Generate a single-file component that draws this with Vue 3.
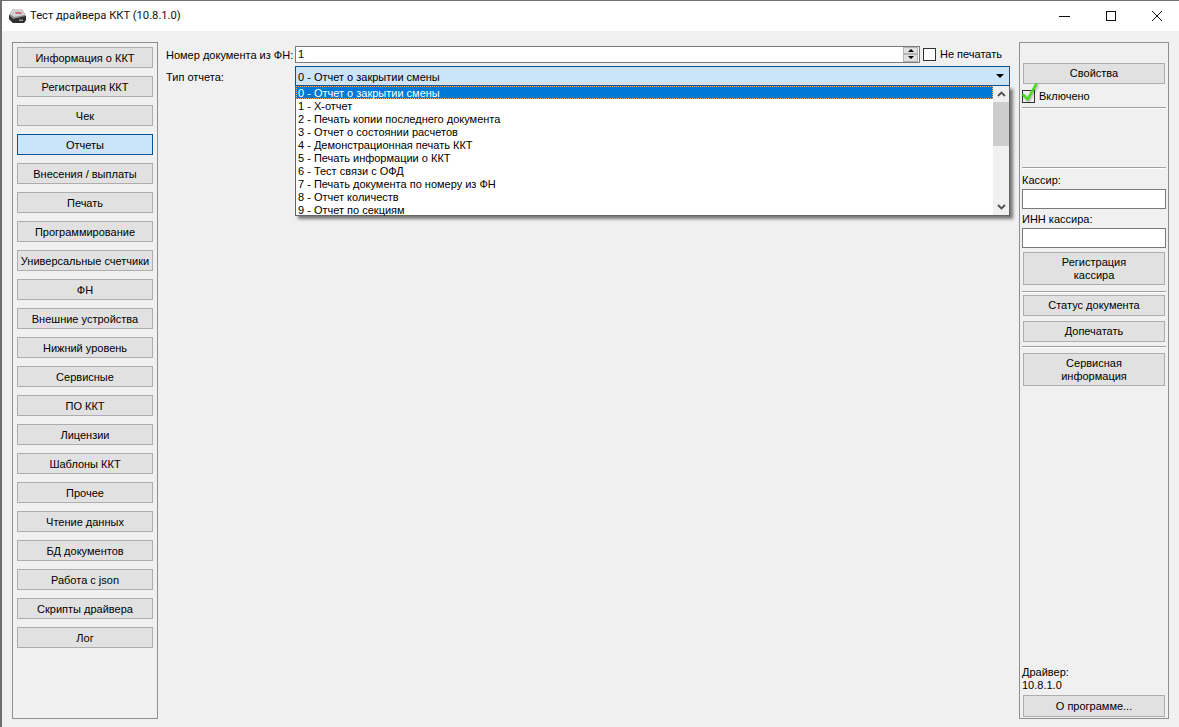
<script setup>
const navItems = ['Информация о ККТ','Регистрация ККТ','Чек','Отчеты','Внесения / выплаты','Печать','Программирование','Универсальные счетчики','ФН','Внешние устройства','Нижний уровень','Сервисные','ПО ККТ','Лицензии','Шаблоны ККТ','Прочее','Чтение данных','БД документов','Работа с json','Скрипты драйвера','Лог']
const reports = ['0 - Отчет о закрытии смены','1 - X-отчет','2 - Печать копии последнего документа','3 - Отчет о состоянии расчетов','4 - Демонстрационная печать ККТ','5 - Печать информации о ККТ','6 - Тест связи с ОФД','7 - Печать документа по номеру из ФН','8 - Отчет количеств','9 - Отчет по секциям']
</script>

<template>
  <div class="window">
    <header class="titlebar">
      <svg class="appicon" width="19" height="18" viewBox="0 0 19 18">
        <path d="M1 8 L5 2 H14 L18 9 V13 L16 16 H5 L1 12Z" fill="#8a8a8a"/>
        <path d="M5 2 H14 L17 8 L6 10 L2 7Z" fill="#d2d2d2"/>
        <path d="M7 5 H13 L14 7 H8Z" fill="#c9707e"/>
        <path d="M1 8 L5 12 V16 L1 12Z M5 12 L18 9 V13 L16 16 H5Z" fill="#2e2e2e"/>
        <path d="M11 12.5 H15 V14 H11Z" fill="#9a9a9a"/>
      </svg>
      <span class="title">Тест драйвера ККТ (10.8.1.0)</span>
      <div class="winbtns">
        <svg width="12" height="12" viewBox="0 0 12 12"><path d="M0 6.5H11" stroke="#111" fill="none"/></svg>
        <svg width="12" height="12" viewBox="0 0 12 12"><rect x="1.5" y="1.5" width="9" height="9" stroke="#111" fill="none"/></svg>
        <svg width="12" height="12" viewBox="0 0 12 12"><path d="M1 1L11 11M11 1L1 11" stroke="#111" fill="none"/></svg>
      </div>
    </header>
    <main class="body">
      <nav class="panel left">
        <button v-for="n in navItems" :key="n" class="btn nav" :class="{ active: n === 'Отчеты' }">{{ n }}</button>
      </nav>
      <section class="center">
        <div class="row first">
          <label class="lbl">Номер документа из ФН:</label>
          <div class="spin">
            <span class="val">1</span>
            <span class="spinbtns">
              <span class="spinbtn"><i class="up"></i></span>
              <span class="spinbtn"><i class="down"></i></span>
            </span>
          </div>
          <span class="chk"></span>
          <span class="chklbl">Не печатать</span>
        </div>
        <div class="row second">
          <label class="lbl">Тип отчета:</label>
          <div class="combowrap">
            <div class="combo">
              <span class="comboval">0 - Отчет о закрытии смены</span>
              <i class="caret"></i>
            </div>
            <div class="dropdown">
              <ul class="items">
                <li v-for="(r, i) in reports" :key="r" :class="{ sel: i === 0 }">{{ r }}</li>
              </ul>
              <div class="scroll">
                <svg class="arrow" width="9" height="6" viewBox="0 0 9 6"><path d="M1 5L4.5 1.5L8 5" stroke="#505050" stroke-width="1.8" fill="none"/></svg>
                <div class="track"><div class="thumb"></div></div>
                <svg class="arrow" width="9" height="6" viewBox="0 0 9 6"><path d="M1 1L4.5 4.5L8 1" stroke="#505050" stroke-width="1.8" fill="none"/></svg>
              </div>
            </div>
          </div>
        </div>
      </section>
      <aside class="panel right">
        <button class="btn props">Свойства</button>
        <div class="enabled">
          <span class="chk"></span>
          <svg class="tick" width="18" height="20" viewBox="0 0 18 20"><path d="M1.5 12L6.5 17.5L15.5 1.5" fill="none" stroke="#44dc14" stroke-width="2.4" stroke-linejoin="miter"/></svg>
          <span>Включено</span>
        </div>
        <hr class="sep s1" />
        <hr class="sep s2" />
        <label class="cap c1">Кассир:</label>
        <div class="field"></div>
        <label class="cap c2">ИНН кассира:</label>
        <div class="field"></div>
        <button class="btn tall b1">Регистрация<br />кассира</button>
        <hr class="sep s3" />
        <button class="btn">Статус документа</button>
        <button class="btn b2">Допечатать</button>
        <hr class="sep s4" />
        <button class="btn tall">Сервисная<br />информация</button>
        <div class="driver">Драйвер:<br />10.8.1.0</div>
        <button class="btn about">О программе...</button>
      </aside>
    </main>
  </div>
</template>

<style scoped>
.window {
  width: 1179px; height: 727px; box-sizing: border-box; overflow: hidden;
  background: #f0f0f0; border-top: 1px solid #707070; border-left: 2px solid #6e6e6e;
  font: 11px/13px "Liberation Sans", Tahoma, sans-serif; color: #000;
  display: flex; flex-direction: column;
}
.titlebar { height: 30px; background: #fff; display: flex; align-items: center; padding-left: 6px; flex: none; }
.appicon { flex: none; }
.title { font: 11.2px/16px Roboto, sans-serif; margin-left: 3px; color: #111; white-space: nowrap; }
.winbtns { margin-left: auto; display: flex; gap: 34px; padding-right: 16px; }
.body { flex: 1; display: flex; padding: 11px 10px 8px 10px; gap: 8px; }
.panel { border: 1px solid #8f8f8f; box-sizing: border-box; display: flex; flex-direction: column; }
.left { width: 146px; padding: 4px 4px; gap: 8px; }
.btn {
  font: inherit; color: #000; background: #e1e1e1; border: 1px solid #adadad; padding: 0;
  height: 21px; flex: none; box-sizing: border-box; text-align: center; white-space: nowrap;
}
.nav { padding-top: 1px; }
.nav.active { background: #cce4f7; border-color: #005499; }
.center { flex: 1; min-width: 0; }
.row { display: flex; position: relative; white-space: nowrap; }
.first { height: 16px; margin-top: 4px; align-items: center; }
.first .lbl { padding-top: 2px; }
.second { margin-top: 4px; }
.lbl { width: 129px; flex: none; }
.second .lbl { padding-top: 5px; }
.spin {
  width: 625px; height: 17px; box-sizing: border-box; background: #fff; border: 1px solid #7a7a7a;
  display: flex; justify-content: space-between; align-items: stretch; padding: 0 1px 0 2px; line-height: 15px;
}
.spinbtns { width: 15px; display: flex; flex-direction: column; padding: 0; }
.spinbtn { flex: 1; background: #e1e1e1; border: 1px solid #b4b4b4; display: flex; align-items: center; justify-content: center; box-sizing: border-box; }
.up { border: 3px solid transparent; border-top: 0; border-bottom: 3px solid #000; }
.down { border: 3px solid transparent; border-bottom: 0; border-top: 3px solid #000; }
.chk { width: 13px; height: 13px; box-sizing: border-box; border: 1px solid #333; background: #fff; flex: none; display: block; }
.first .chk { margin-left: 3px; }
.chklbl { margin-left: 4px; }
.combowrap { width: 715px; position: relative; }
.combo {
  height: 20px; box-sizing: border-box; background: #cce4f7; border: 1px solid #005499;
  display: flex; align-items: center; justify-content: space-between; padding: 0 5px 0 2px;
}
.comboval { padding-top: 2px; }
.caret { border: 4px solid transparent; border-bottom: 0; border-top: 4px solid #000; }
.dropdown {
  position: absolute; top: 20px; left: 0; width: 715px; height: 130px; box-sizing: border-box; background: #fff;
  border: 1px solid #646464; border-top: 0; display: flex; box-shadow: 3px 3px 3px rgba(0,0,0,.5);
}
.items { flex: 1; list-style: none; margin: 0; padding: 0; }
.items li { height: 13px; line-height: 15px; padding-left: 2px; }
.items .sel { background: #0078d7; color: #fff; outline: 1px dotted #f0b070; outline-offset: -1px; }
.scroll { width: 16px; background: #f0f0f0; display: flex; flex-direction: column; align-items: center; }
.arrow { flex: none; margin: 5px 0; }
.track { flex: 1; width: 100%; }
.thumb { height: 44px; background: #cdcdcd; }
.right { width: 150px; padding: 20px 2px 1px 2px; }
.right .btn { width: 142px; margin-left: 1px; }
.enabled { position: relative; display: flex; align-items: center; gap: 4px; margin-top: 5px; height: 14px; }
.enabled .chk { background: transparent; }
.tick { position: absolute; left: -1px; top: -7px; filter: drop-shadow(1px 1px 1px rgba(0,0,0,.35)); }
.sep { border: 0; border-top: 1px solid #a0a0a0; border-bottom: 1px solid #fff; margin: 0; width: 144px; height: 0; flex: none; }
.s1 { margin-top: 4px; }
.s2 { margin-top: 58px; }
.cap { display: block; }
.c1 { margin-top: 5px; }
.c2 { margin-top: 4px; }
.field { width: 144px; height: 20px; box-sizing: border-box; border: 1px solid #7a7a7a; background: #fff; margin-top: 2px; flex: none; }
.tall { height: 33px !important; }
.b1 { margin-top: 4px; }
.s3 { margin-top: 6px; margin-bottom: 2px; }
.b2 { margin-top: 5px; }
.s4 { margin-top: 4px; margin-bottom: 5px; }
.driver { margin-top: auto; }
.about { height: 22px !important; margin-top: 3px; }
</style>

<style>
html, body { margin: 0; padding: 0; background: #f0f0f0; }
</style>
